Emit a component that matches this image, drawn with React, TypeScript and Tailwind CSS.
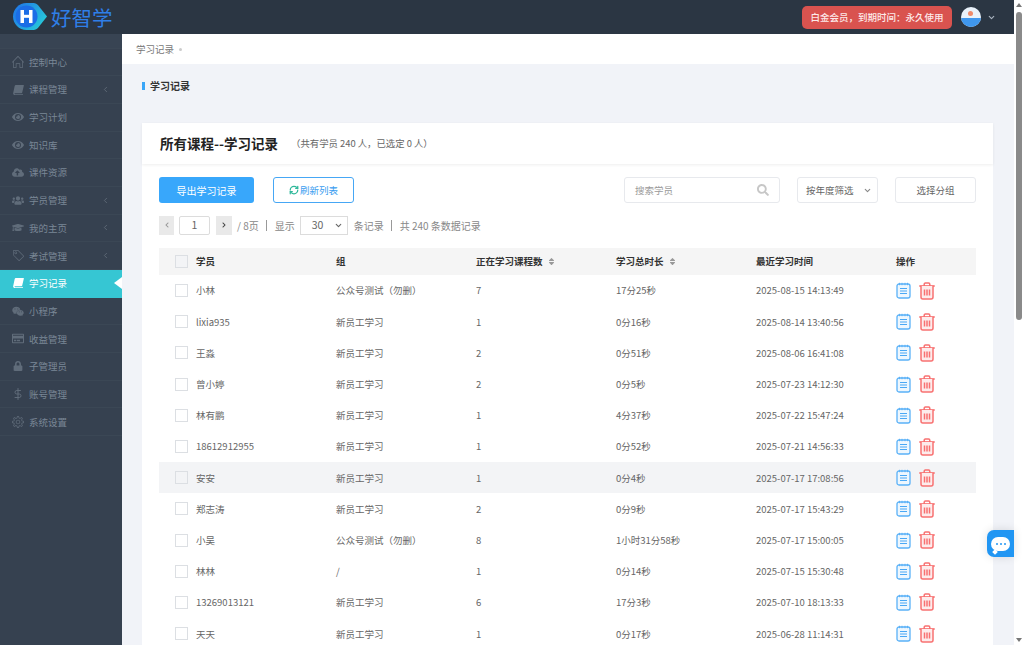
import { FaEye, FaCloudUploadAlt, FaUsers, FaGraduationCap, FaWeixin, FaRegCreditCard, FaLock, FaSearch, FaChevronLeft, FaChevronRight, FaSort } from 'react-icons/fa'
import { FiChevronDown, FiChevronLeft, FiDollarSign } from 'react-icons/fi'
import { SlHome, SlSettings, SlTag } from 'react-icons/sl'
import { LuRefreshCw } from 'react-icons/lu'

function BookIcon() {
  return (
    <svg width="11" height="10" viewBox="0 0 12 11" fill="currentColor">
      <path d="M3 0h8.500c.4 0 .5.300.4.600L10 8.500c-.1.400-.3.500-.7.500H2.200c-.5 0-.7.300-.6.600 0 .3.300.5.700.5h7.900l.4-.4.400.1-.3 1c-.1.100-.2.200-.4.200H2c-1.200 0-2-.9-1.900-2L1.800 1.200C2 .5 2.400 0 3 0z" />
    </svg>
  )
}

const menu = [
  { label: '控制中心', icon: <SlHome size={12} /> },
  { label: '课程管理', icon: <BookIcon />, arrow: true },
  { label: '学习计划', icon: <FaEye size={12} /> },
  { label: '知识库', icon: <FaEye size={12} /> },
  { label: '课件资源', icon: <FaCloudUploadAlt size={13} /> },
  { label: '学员管理', icon: <FaUsers size={13} />, arrow: true },
  { label: '我的主页', icon: <FaGraduationCap size={13} />, arrow: true },
  { label: '考试管理', icon: <SlTag size={11} className="-scale-x-100" />, arrow: true },
  { label: '学习记录', icon: <BookIcon />, active: true },
  { label: '小程序', icon: <FaWeixin size={13} /> },
  { label: '收益管理', icon: <FaRegCreditCard size={13} /> },
  { label: '子管理员', icon: <FaLock size={10} /> },
  { label: '账号管理', icon: <FiDollarSign size={12} /> },
  { label: '系统设置', icon: <SlSettings size={12} /> },
]

const rows = [
  ['小林', '公众号测试（勿删）', '7', '17分25秒', '2025-08-15 14:13:49'],
  ['lixia935', '新员工学习', '1', '0分16秒', '2025-08-14 13:40:56'],
  ['王淼', '新员工学习', '2', '0分51秒', '2025-08-06 16:41:08'],
  ['曾小婷', '新员工学习', '2', '0分5秒', '2025-07-23 14:12:30'],
  ['林有鹏', '新员工学习', '1', '4分37秒', '2025-07-22 15:47:24'],
  ['18612912955', '新员工学习', '1', '0分52秒', '2025-07-21 14:56:33'],
  ['安安', '新员工学习', '1', '0分4秒', '2025-07-17 17:08:56'],
  ['郑志涛', '新员工学习', '2', '0分9秒', '2025-07-17 15:43:29'],
  ['小吴', '公众号测试（勿删）', '8', '1小时31分58秒', '2025-07-17 15:00:05'],
  ['林林', '/', '1', '0分14秒', '2025-07-15 15:30:48'],
  ['13269013121', '新员工学习', '6', '17分3秒', '2025-07-10 18:13:33'],
  ['天天', '新员工学习', '1', '0分17秒', '2025-06-28 11:14:31'],
]

function NoteIcon() {
  return (
    <svg width="15" height="17" viewBox="0 0 15 17" fill="none" stroke="#5ab1f7" strokeWidth="1.300">
      <rect x="1" y="2" width="13" height="14" rx="2" fill="#eef7fe" />
      <path d="M3.500 .8v2.400M6 .8v2.400M9 .8v2.400M11.500 .8v2.400" strokeWidth="1" />
      <path d="M4 6.500h7M4 9h7M4 11.500h7" stroke="#4aa8f5" strokeWidth="1" />
    </svg>
  )
}

function TrashIcon() {
  return (
    <svg width="16" height="18" viewBox="0 0 16 18" fill="none" stroke="#f87171" strokeWidth="1.500">
      <path d="M.3 4h15.400" strokeWidth="1.700" />
      <path d="M5.200 4V2.200C5.200 1.400 5.800 .9 6.400 .9h3.200c.6 0 1.200.5 1.200 1.300V4" />
      <path d="M2 4v11c0 1.100.7 2 1.800 2h8.400c1.100 0 1.800-.9 1.800-2V4" fill="#fdecec" />
      <path d="M5.500 7.500v6M8 7.500v6M10.500 7.500v6" />
    </svg>
  )
}

function Check({ grey }: { grey?: boolean }) {
  return <span className={`block w-[13px] h-[13px] border border-[#dcdfe3] ${grey ? 'bg-[#f3f4f6]' : 'bg-white'}`} />
}

export default function App() {
  return (
    <div className="flex h-[645px] overflow-hidden bg-white text-[9.500px] text-[#666] font-['Noto_Sans_CJK_SC',sans-serif]">
      <div className="flex flex-col w-[1014px] shrink-0">
        {/* Header */}
        <div className="flex items-center h-[34px] shrink-0 bg-[#2b3643] pl-[13px] pr-[18px]">
          <svg width="35" height="27" viewBox="0 0 35 27" className="shrink-0 -mt-[1px]">
            <defs>
              <linearGradient id="lg" x1="0" y1="0" x2="1" y2="0.6">
                <stop offset="0" stopColor="#1f6fe8" />
                <stop offset="1" stopColor="#27c7d9" />
              </linearGradient>
            </defs>
            <path d="M13.500 0h7c2 0 3.500 1 4.800 2.500L34 13.500l-8.700 11C24 26 22.500 27 20.500 27h-7C6 27 0 21 0 13.500S6 0 13.500 0z" fill="url(#lg)" />
            <circle cx="13.500" cy="13.500" r="11" fill="#1b6de6" />
            <rect x="7.500" y="7" width="3.500" height="13" fill="#fff" />
            <rect x="16" y="7" width="3.500" height="13" fill="#fff" />
            <rect x="10.500" y="11.800" width="6" height="3" fill="#fff" />
          </svg>
          <span className="ml-[3px] text-[20.500px] leading-none text-[#2f7fe8]">好智学</span>
          <div className="ml-auto flex items-center">
            <span className="flex items-center justify-center w-[150px] h-[23px] rounded-[5px] bg-[#d9534f] text-[#fdeaea] text-[9.500px] font-medium">
              白金会员，到期时间：永久使用
            </span>
            <span className="relative ml-[9px] w-[20px] h-[20px] rounded-full overflow-hidden bg-[#e8f1fa]">
              <span className="absolute left-[7px] top-[4px] w-[5px] h-[5px] rounded-full bg-[#ee8a6b]" />
              <span className="absolute left-0 right-0 bottom-0 h-[9px] bg-[#3f97ee]" />
            </span>
            <FiChevronDown size={9} strokeWidth={3} className="ml-[6px] text-[#aab4c0]" />
          </div>
        </div>

        <div className="flex flex-1 min-h-0">
          {/* Sidebar */}
          <div className="w-[122px] shrink-0 bg-[#364150]">
            <div className="h-[14.500px] border-b border-[#3b4755] bg-[#384453]" />
            {menu.map((m) => (
              <div
                key={m.label}
                className={`relative flex items-center h-[27.700px] pl-[12px] border-b border-[#3b4755] ${m.active ? 'bg-[#36c6d3] text-white border-transparent' : 'text-[#7a8796]'}`}
              >
                <span className={`flex justify-center w-[12px] ${m.active ? 'text-white' : 'text-[#606c7a]'}`}>{m.icon}</span>
                <span className="ml-[5px]">{m.label}</span>
                {m.arrow && <FiChevronLeft size={9} className="absolute right-[12px] text-[#67727f]" />}
                {m.active && (
                  <span className="absolute right-0 w-0 h-0 border-y-[6.500px] border-y-transparent border-r-[8px] border-r-white" />
                )}
              </div>
            ))}
          </div>

          {/* Main */}
          <div className="flex-1 min-w-0 bg-[#f1f3f8]">
            <div className="flex items-center h-[30px] bg-white pl-[14px] text-[#777]">
              学习记录
              <span className="ml-[5px] w-[3px] h-[3px] rounded-full bg-[#ccc]" />
            </div>
            <div className="flex items-center h-[43px] pl-[20px] font-bold text-[10px] text-[#333]">
              <span className="w-[3px] h-[8px] bg-[#3aa6f8] mr-[5px]" />
              学习记录
            </div>
            <div className="relative mt-[16px] ml-[20px] w-[851px] bg-white">
              <div className="flex items-center h-[41px] pl-[18px] shadow-[0_1px_3px_rgba(0,0,0,0.07)]">
                <span className="text-[13.500px] font-bold text-[#222]">所有课程--学习记录</span>
                <span className="ml-[13px] text-[9.400px] text-[#666]">（共有学员 240 人，已选定 0 人）</span>
              </div>

              {/* Toolbar */}
              <div className="flex items-start mt-[13px] px-[17px]">
                <button className="w-[95px] h-[26px] rounded-[3px] bg-[#38a7fb] text-white text-[10px]">导出学习记录</button>
                <button className="flex items-center justify-center ml-[19px] w-[81px] h-[26px] rounded-[3px] border border-[#46a7f5] bg-white text-[#3b9df0] text-[9.500px]">
                  <LuRefreshCw size={10} strokeWidth={3} className="text-[#2fb89a] mr-[1px]" />
                  刷新列表
                </button>
                <div className="flex items-center ml-auto w-[156px] h-[26px] px-[10px] rounded-[3px] border border-[#e7e9ed] text-[#9a9a9a]">
                  搜索学员
                  <FaSearch size={12} className="ml-auto text-[#c7c7c7]" />
                </div>
                <div className="flex items-center ml-[17px] w-[81px] h-[26px] pl-[8px] pr-[5px] rounded-[3px] border border-[#e7e9ed] text-[#666]">
                  按年度筛选
                  <FiChevronDown size={9} strokeWidth={3} className="ml-auto text-[#888]" />
                </div>
                <div className="flex items-center justify-center ml-[17px] w-[81px] h-[26px] rounded-[3px] border border-[#e7e9ed] text-[#666]">选择分组</div>
              </div>

              {/* Pagination */}
              <div className="flex items-center mt-[12px] px-[17px] h-[20px] text-[10px] text-[#888]">
                <span className="flex items-center justify-center w-[15px] h-[19px] bg-[#e9e9e9] text-[#999]"><FaChevronLeft size={6} /></span>
                <span className="flex items-center justify-center ml-[5px] w-[31px] h-[19px] rounded-[2px] border border-[#dcdcdc] text-[#666] text-[10.500px]">1</span>
                <span className="flex items-center justify-center ml-[6px] w-[16px] h-[19px] bg-[#e9e9e9] text-[#444]"><FaChevronRight size={6} /></span>
                <span className="ml-[5px]">/ 8页</span>
                <span className="ml-[7px] mr-[8px] w-px h-[11px] bg-[#999]" />
                <span>显示</span>
                <span className="flex items-center ml-[5px] w-[48px] h-[19px] pl-[11px] pr-[4px] border border-[#dcdcdc] text-[#666] text-[10.500px]">
                  30
                  <FiChevronDown size={9} strokeWidth={3} className="ml-auto" />
                </span>
                <span className="ml-[6px]">条记录</span>
                <span className="ml-[7px] mr-[8px] w-px h-[11px] bg-[#999]" />
                <span>共 240 条数据记录</span>
              </div>

              {/* Table */}
              <div className="mt-[13px] mx-[17px]">
                <div className="grid grid-cols-[37px_140px_140px_140px_140px_140px_80px] items-center h-[27px] bg-[#f5f5f5] font-bold text-[#333] text-[9.500px]">
                  <span className="pl-[16px]"><Check grey /></span>
                  <span>学员</span>
                  <span>组</span>
                  <span className="flex items-center">正在学习课程数<FaSort size={9} className="ml-[4px] text-[#999]" /></span>
                  <span className="flex items-center">学习总时长<FaSort size={9} className="ml-[4px] text-[#999]" /></span>
                  <span>最近学习时间</span>
                  <span>操作</span>
                </div>
                {rows.map((r, i) => (
                  <div
                    key={r[4]}
                    className={`grid grid-cols-[37px_140px_140px_140px_140px_140px_80px] items-center h-[31.200px] text-[9.500px] text-[#666] ${i === 6 ? 'bg-[#f3f4f6]' : ''}`}
                  >
                    <span className="pl-[16px]"><Check grey={i === 6} /></span>
                    <span>{r[0]}</span>
                    <span>{r[1]}</span>
                    <span>{r[2]}</span>
                    <span>{r[3]}</span>
                    <span>{r[4]}</span>
                    <span className="flex items-center gap-[8px]"><NoteIcon /><TrashIcon /></span>
                  </div>
                ))}
              </div>

              {/* Chat bubble */}
              <div className="absolute left-[845px] top-[407px] flex items-center justify-center w-[27px] h-[27px] rounded-l-[7px] bg-[#2196f3] shadow-[0_0_10px_rgba(0,0,0,0.12)]">
                <span className="relative flex items-center justify-center gap-[2px] w-[19px] h-[14px] rounded-[7px] bg-white">
                  <span className="w-[2px] h-[2px] rounded-full bg-[#2196f3]" />
                  <span className="w-[2px] h-[2px] rounded-full bg-[#2196f3]" />
                  <span className="w-[2px] h-[2px] rounded-full bg-[#2196f3]" />
                  <span className="absolute left-[2px] -bottom-[3px] w-[4px] h-[4px] bg-white rotate-45" />
                </span>
              </div>
            </div>
          </div>
        </div>
      </div>

      {/* Page scrollbar */}
      <div className="w-[10px] shrink-0 bg-white flex flex-col items-center">
        <span className="mt-[3px] w-0 h-0 border-x-[3.500px] border-x-transparent border-b-[4px] border-b-[#777]" />
        <span className="mt-[5px] w-[6px] h-[308px] rounded-full bg-[#8a8a8a]" />
        <span className="mt-auto mb-[3px] w-0 h-0 border-x-[3.500px] border-x-transparent border-t-[4px] border-t-[#777]" />
      </div>
    </div>
  )
}
